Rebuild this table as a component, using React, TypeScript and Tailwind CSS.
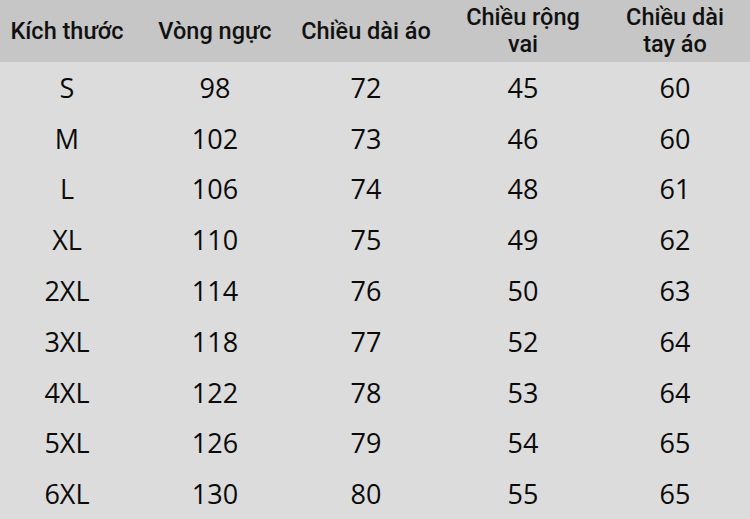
import React from "react";

const rows = [
  ["S", "98", "72", "45", "60"],
  ["M", "102", "73", "46", "60"],
  ["L", "106", "74", "48", "61"],
  ["XL", "110", "75", "49", "62"],
  ["2XL", "114", "76", "50", "63"],
  ["3XL", "118", "77", "52", "64"],
  ["4XL", "122", "78", "53", "64"],
  ["5XL", "126", "79", "54", "65"],
  ["6XL", "130", "80", "55", "65"],
];

const headers = [
  ["Kích thước"],
  ["Vòng ngực"],
  ["Chiều dài áo"],
  ["Chiều rộng", "vai"],
  ["Chiều dài", "tay áo"],
];

const cols = "grid grid-cols-[134px_162px_140px_174px_130px]";

export default function App() {
  return (
    <div className="w-[750px] h-[519px] bg-[#dcdcdc] flex flex-col overflow-hidden">
      <div className={`${cols} h-[62px] bg-[#c6c6c6] items-center text-[#111]`} style={{ fontFamily: "Roboto, sans-serif" }}>
        {headers.map((h, i) => (
          <div key={i} className="flex flex-col items-center text-[23.5px] font-medium leading-[27px]">
            {h.map((l, j) => (
              <span key={j} className="whitespace-nowrap">{l}</span>
            ))}
          </div>
        ))}
      </div>
      <div className="flex-1 flex flex-col" style={{ fontFamily: "'Open Sans', sans-serif" }}>
        {rows.map((r, i) => (
          <div key={i} className={`${cols} flex-1 items-center text-[#0a0a0a]`}>
            {r.map((c, j) => (
              <div key={j} className="text-center text-[27px] leading-none">{c}</div>
            ))}
          </div>
        ))}
      </div>
    </div>
  );
}
